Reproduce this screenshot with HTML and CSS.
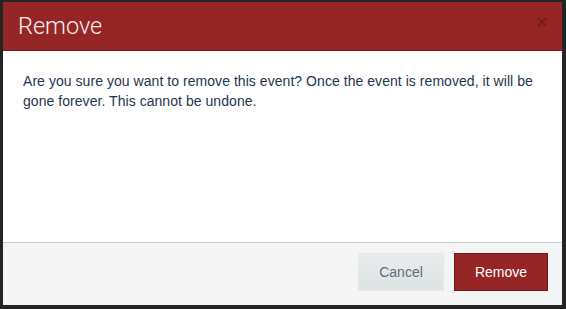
FILE: index.html
```html
<!DOCTYPE html>
<html>
<head>
<meta charset="utf-8">
<link rel="stylesheet" href="styles.css">
</head>
<body>
<div class="modal">
  <div class="modal-header">
    <h2 class="modal-title">Remove</h2>
    <button class="close" aria-label="Close">
      <svg width="10" height="10" viewBox="0 0 10 10"><path d="M1.5 1.5 L8.5 8.5 M8.5 1.5 L1.5 8.5" stroke="#6e1a1a" stroke-width="2.2" stroke-linecap="square"/></svg>
    </button>
  </div>
  <div class="modal-body">
    <p>Are you sure you want to remove this event? Once the event is removed, it will be gone forever. This cannot be undone.</p>
  </div>
  <div class="modal-footer">
    <button class="btn btn-cancel">Cancel</button>
    <button class="btn btn-remove">Remove</button>
  </div>
</div>
</body>
</html>
```
FILE: styles.css
```css
html, body {
  margin: 0;
  padding: 0;
  background: #242424;
  height: 100%;
}
body {
  padding: 2px 0 0 3px;
  box-sizing: border-box;
}
.modal {
  width: 559px;
  height: 303px;
  background: #fff;
  display: flex;
  flex-direction: column;
  font-family: "Liberation Sans", Arial, sans-serif;
}
.modal-header {
  height: 48px;
  flex: none;
  background: #962626;
  border-bottom: 1px solid #7c1a1a;
  display: flex;
  align-items: center;
  justify-content: space-between;
  padding: 0 15px;
}
.modal-title {
  margin: 0;
  font-family: Roboto, "Noto Sans", sans-serif;
  font-weight: 300;
  font-size: 23.5px;
  color: #f6ecec;
}
.close {
  background: none;
  border: 0;
  padding: 0;
  width: 10px;
  height: 10px;
  display: flex;
  opacity: 0.75;
  position: relative;
  top: -4px;
}
.modal-body {
  flex: 1;
  padding: 20px 20px;
}
.modal-body p {
  margin: 0;
  font-size: 14px;
  line-height: 20px;
  color: #1f3550;
  letter-spacing: 0.05px;
}
.modal-footer {
  flex: none;
  height: 52px;
  border-top: 1px solid #c9c9c9;
  background: #f4f4f4;
  display: flex;
  justify-content: flex-end;
  align-items: flex-start;
  padding: 10px 14px 0 0;
  gap: 10px;
}
.btn {
  height: 38px;
  font-family: "Liberation Sans", Arial, sans-serif;
  font-size: 14px;
  padding: 0;
  cursor: pointer;
}
.btn-cancel {
  width: 86px;
  background: linear-gradient(#e9ecec, #dde2e2);
  border: 1px solid #e4e7e7;
  color: #5d6e80;
}
.btn-remove {
  width: 94px;
  background: #962626;
  border: 1px solid #7a1515;
  color: #fff;
}
```
